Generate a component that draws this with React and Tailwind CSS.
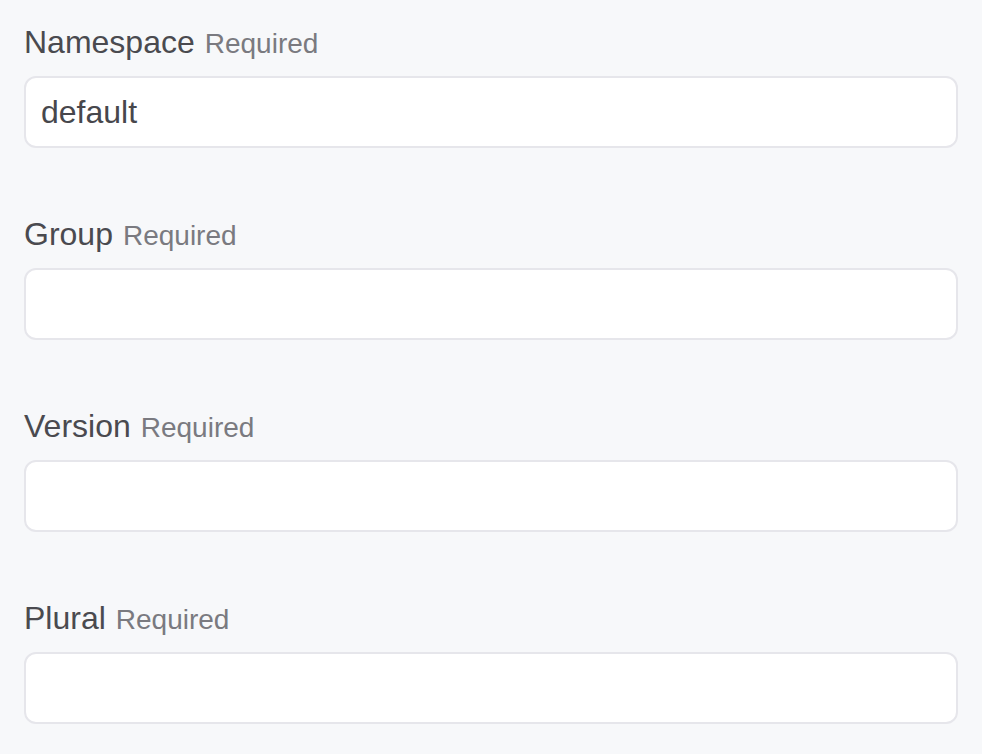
import React, { useState } from "react";

const fields = [
  { name: "namespace", label: "Namespace", initial: "default" },
  { name: "group", label: "Group", initial: "" },
  { name: "version", label: "Version", initial: "" },
  { name: "plural", label: "Plural", initial: "" },
];

/* 한 줄짜리 입력 필드 */
const Field = ({ label, value, onChange }) => (
  <div className="mb-[66px]">
    <label className="block h-10 leading-[40px] mb-[14px] text-[32px] text-[#4a4a4f]">
      {label}
      <span className="ml-[10px] text-[28px] text-[#7a7a80]">Required</span>
    </label>
    <input
      type="text"
      value={value}
      onChange={(e) => onChange(e.target.value)}
      className="block w-full h-[72px] px-[15px] bg-white border-2 border-[#e6e6eb] rounded-xl text-[32px] text-[#47474c] outline-none"
    />
  </div>
);

export default function App() {
  const [values, setValues] = useState(() =>
    Object.fromEntries(fields.map((f) => [f.name, f.initial]))
  );

  return (
    <div
      className="min-h-[754px] bg-[#f7f8fa] px-6 pt-[22px]"
      style={{ fontFamily: '"Liberation Sans", Arial, sans-serif' }}
    >
      {fields.map((f) => (
        <Field
          key={f.name}
          label={f.label}
          value={values[f.name]}
          onChange={(v) => setValues((s) => ({ ...s, [f.name]: v }))}
        />
      ))}
    </div>
  );
}
